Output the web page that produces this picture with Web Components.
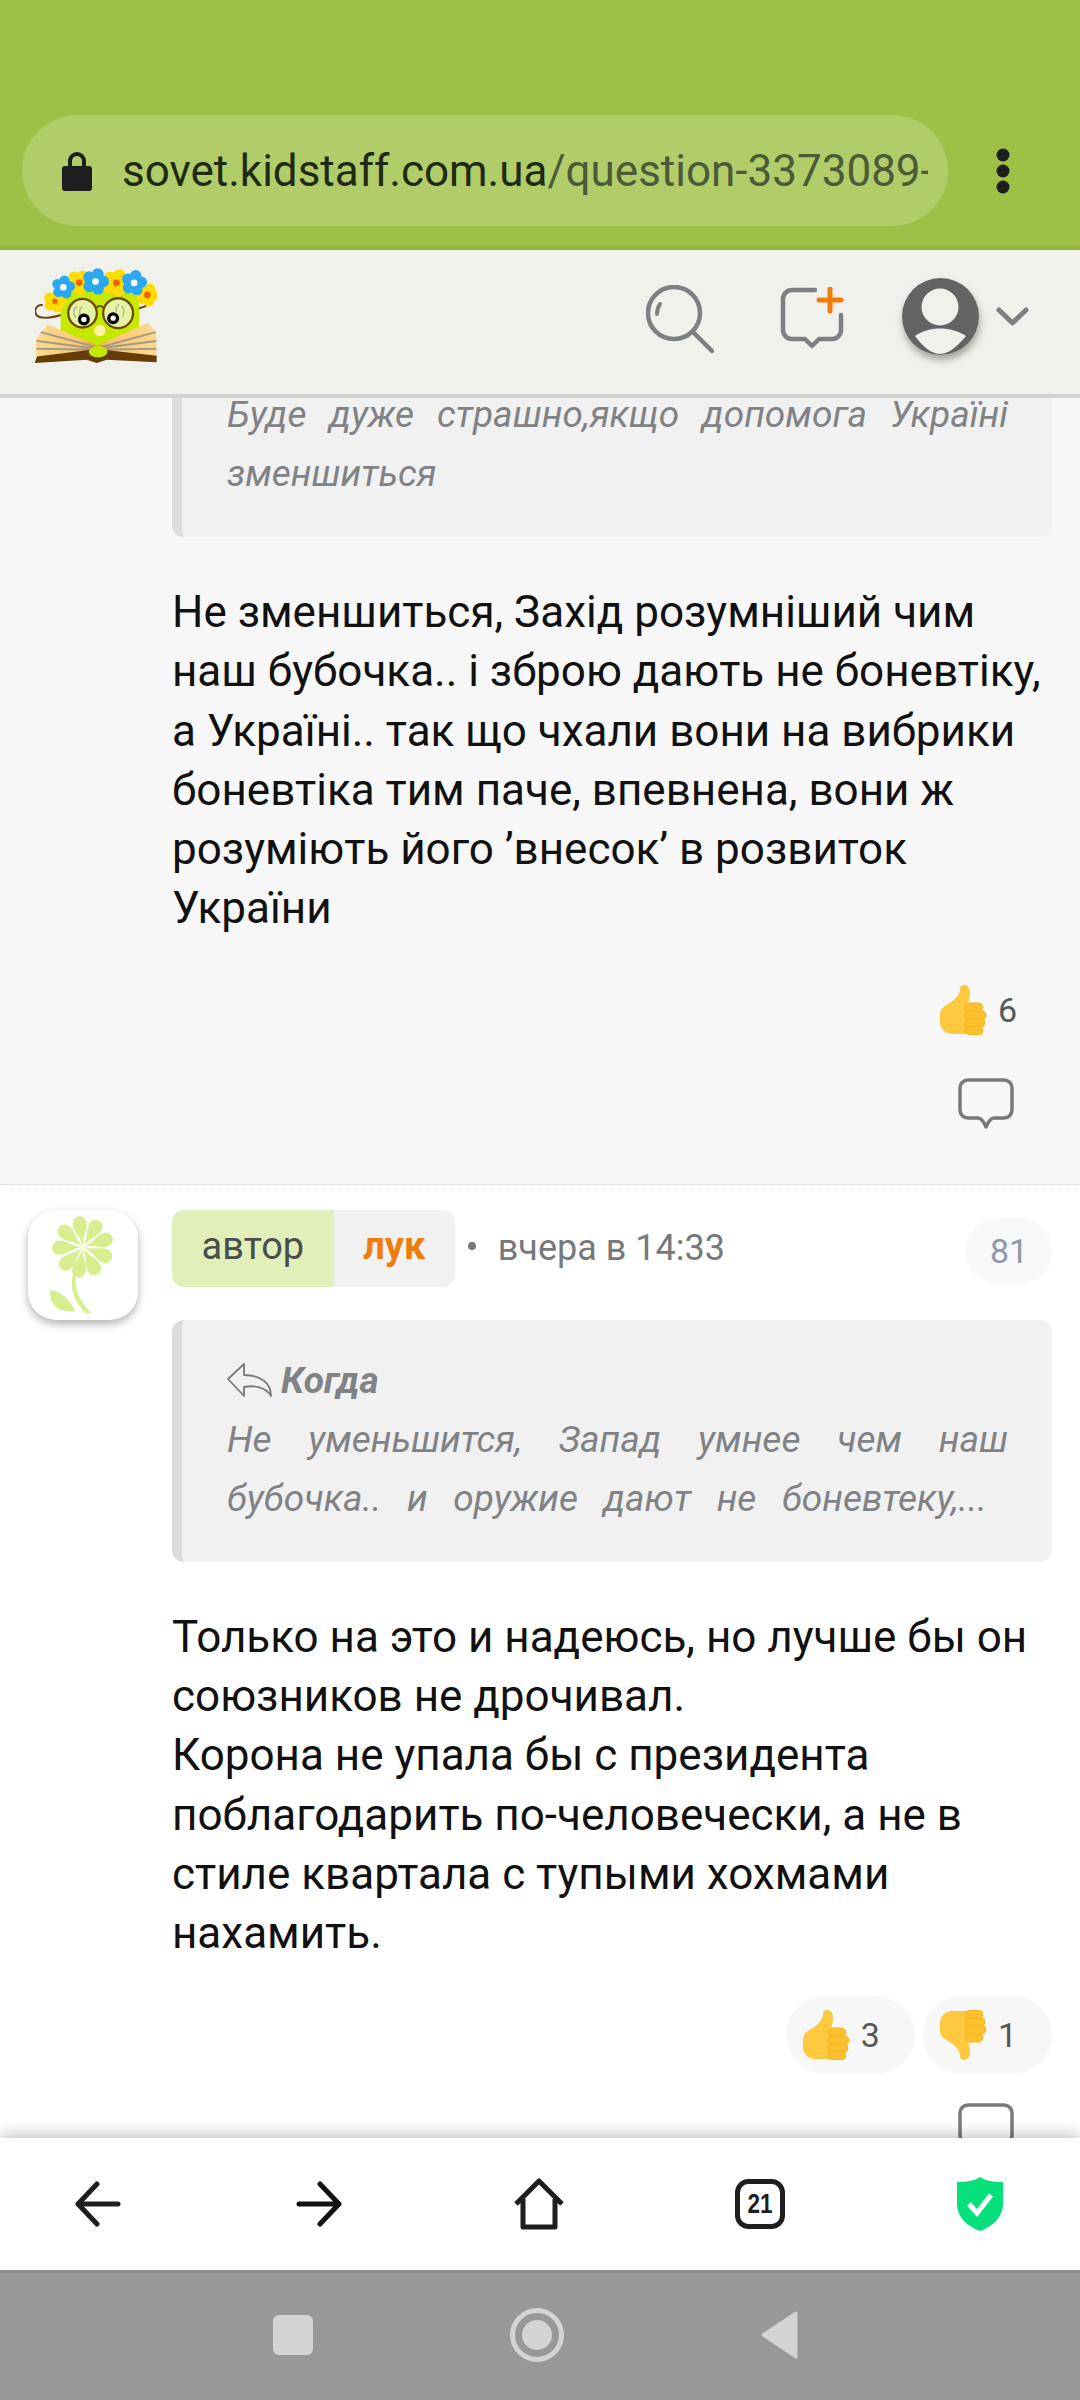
<!DOCTYPE html>
<html lang="uk">
<head>
<meta charset="utf-8">
<title>sovet.kidstaff.com.ua</title>
<style>
  html, body { margin: 0; padding: 0; }
  body {
    width: 1080px;
    height: 2400px;
    overflow: hidden;
    display: flex;
    flex-direction: column;
    background: #fff;
    font-family: Roboto, "Liberation Sans", sans-serif;
  }
</style>
</head>
<body>
<browser-bar url-host="sovet.kidstaff.com.ua" url-path="/question-3373089-"></browser-bar>
<site-header></site-header>
<comment-feed>
  <comment-item shaded>
    <quote-box slot="quote" cut>
      Буде дуже страшно,якщо допомога Україні зменшиться
    </quote-box>
    Не зменшиться, Захід розумніший чим наш бубочка.. і зброю дають не боневтіку, а Україні.. так що чхали вони на вибрики боневтіка тим паче, впевнена, вони ж розуміють його ’внесок’ в розвиток України
    <vote-pill slot="votes" kind="up" count="6"></vote-pill>
  </comment-item>
  <comment-item>
    <flower-avatar slot="avatar"></flower-avatar>
    <comment-meta slot="meta" role-name="автор" nick="лук" time="вчера в 14:33" num="81"></comment-meta>
    <quote-box slot="quote" title="Когда">
      <span class="fit">Не уменьшится, Запад умнее чем наш</span>
      <span class="fit short">бубочка.. и оружие дают не боневтеку,...</span>
    </quote-box>
    Только на это и надеюсь, но лучше бы он союзников не дрочивал.<br>Корона не упала бы с президента поблагодарить по-человечески, а не в стиле квартала с тупыми хохмами нахамить.
    <vote-pill slot="votes" kind="up" count="3"></vote-pill>
    <vote-pill slot="votes" kind="down" count="1"></vote-pill>
  </comment-item>
</comment-feed>
<browser-toolbar></browser-toolbar>
<android-nav></android-nav>

<script>
// address bar of the mobile browser
class BrowserBar extends HTMLElement {
  connectedCallback() {
    this.attachShadow({ mode: 'open' });
    this.shadowRoot.innerHTML = `
      <style>
        :host {
          display: flex;
          flex: none;
          align-items: center;
          box-sizing: border-box;
          height: 250px;
          padding: 115px 0 20px 22px;
          background: #9fc046;
          border-bottom: 4px solid #93b33f;
        }
        .pill {
          width: 926px;
          height: 111px;
          box-sizing: border-box;
          padding: 0 20px 0 40px;
          display: flex;
          align-items: center;
          gap: 30px;
          background: #b0cd6a;
          border-radius: 56px;
        }
        .text {
          flex: 1;
          overflow: hidden;
          white-space: nowrap;
          font-size: 44px;
          color: #4b5a37;
        }
        b { font-weight: 400; color: #1f2a14; }
        .dots { margin-left: 48px; display: block; }
      </style>
      <div class="pill">
        <svg width="30" height="40" viewBox="0 0 30 40"><path d="M8 17V10a7 7 0 0 1 14 0v7" fill="none" stroke="#1e1e1e" stroke-width="4"/><rect x="0" y="15" width="30" height="25" rx="3" fill="#1e1e1e"/></svg>
        <div class="text"><b>${this.getAttribute('url-host')}</b>${this.getAttribute('url-path')}</div>
      </div>
      <svg class="dots" width="14" height="46" viewBox="0 0 14 46" fill="#1e1e1e"><circle cx="7" cy="7" r="6.5"/><circle cx="7" cy="23" r="6.5"/><circle cx="7" cy="39" r="6.5"/></svg>
    `;
  }
}

function flower(cx, cy, r, color, mid, midR) {
  let out = '';
  for (let i = 0; i < 5; i++) {
    const a = (i * 72 - 90 + cx % 30) * Math.PI / 180;
    out += `<circle cx="${cx + Math.cos(a) * r}" cy="${cy + Math.sin(a) * r}" r="${r * 0.78}" fill="${color}"/>`;
  }
  return out + `<circle cx="${cx}" cy="${cy}" r="${r * 0.7}" fill="${color}"/><circle cx="${cx}" cy="${cy}" r="${midR}" fill="${mid}"/>`;
}

class SiteHeader extends HTMLElement {
  connectedCallback() {
    this.attachShadow({ mode: 'open' });
    const crown = [
      flower(165, 212, 20, '#ffdc00', '#f2600c', 8),
      flower(443, 193, 20, '#ffdc00', '#f2600c', 10),
      flower(238, 156, 22, '#ffdc00', '#f2600c', 10),
      flower(350, 157, 24, '#ffdc00', '#f2600c', 10),
      flower(190, 170, 20, '#2aa8f2', '#fff', 10),
      flower(287, 153, 23, '#2aa8f2', '#fff', 10),
      flower(403, 157, 22, '#2aa8f2', '#fff', 10)
    ].join('');
    this.shadowRoot.innerHTML = `
      <style>
        :host {
          display: flex;
          flex: none;
          align-items: flex-start;
          box-sizing: border-box;
          height: 148px;
          padding: 17px 51px 0 35px;
          background: #f0f1ea;
          border-bottom: 4px solid #d2d2d2;
          position: relative;
          z-index: 2;
        }
        .logo { display: block; }
        .tools { margin-left: auto; margin-top: 11px; display: flex; align-items: flex-start; }
        .search { margin: 7px 66px 0 0; }
        .ask { margin: 9px 58.5px 0 0; }
        .user { width: 77px; height: 77px; border-radius: 50%; box-shadow: 1px 5px 7px rgba(70,70,60,.45); }
        .user svg { display: block; }
        .chev { margin: 29px 0 0 17px; }
      </style>
      <svg class="logo" width="122" height="97" viewBox="105 110 367 290">
        <defs><linearGradient id="pg" x1="0" x2="1"><stop offset="0" stop-color="#fcd98f"/><stop offset=".38" stop-color="#fbc872"/><stop offset=".5" stop-color="#f59436"/><stop offset=".62" stop-color="#fbc872"/><stop offset="1" stop-color="#fcd98f"/></linearGradient></defs>
        <path d="M128 224c-12-4-24 8-22 22 4 26 60 16 96 0" fill="none" stroke="#6d4210" stroke-width="6"/>
        <path d="M400 240l40-14" stroke="#6d4210" stroke-width="6"/>
        <rect x="182" y="180" width="236" height="170" fill="#c4e800"/>
        <path d="M108 380V325l35-43 150 63 150-68 27 30v73z" fill="url(#pg)"/>
        <path d="M122 305l165 45M110 332l175 22M110 355l175 3M468 305l-165 45M470 332l-175 22M470 355l-175 3" stroke="#a49a86" stroke-width="6"/>
        <path d="M104 398l7-20 180-22 180 20v20l-150-8-30 10-30-10z" fill="#643c08"/>
        <ellipse cx="295" cy="364" rx="28" ry="17" fill="#c4e800"/>
        <circle cx="300" cy="300" r="17" fill="#fff2a0"/>
        <circle cx="248" cy="248" r="43" fill="#e4f2a6" stroke="#6d4a06" stroke-width="7"/>
        <circle cx="355" cy="248" r="45" fill="#e4f2a6" stroke="#6d4a06" stroke-width="7"/>
        <path d="M290 232c5-8 14-8 20 0" fill="none" stroke="#6d4a06" stroke-width="5"/>
        <path d="M228 262c-10-14-8-28 4-34M244 258c-8-12-6-24 4-30M350 244c-2-10 2-18 8-22M368 258c8-12 6-22-2-32" fill="none" stroke="#a8b48a" stroke-width="4"/>
        <circle cx="252" cy="267" r="18" fill="#000"/><circle cx="252" cy="267" r="8" fill="#fff"/>
        <circle cx="340" cy="263" r="18" fill="#000"/><circle cx="340" cy="263" r="8" fill="#fff"/>
        ${crown}
      </svg>
      <div class="tools">
        <svg class="search" width="68" height="68" viewBox="0 0 68 68" fill="none" stroke="#7c8083" stroke-width="4.5" stroke-linecap="round"><circle cx="28" cy="28" r="26"/><path d="M47 47l19 19"/><path d="M11 29c0-4 1-7 3-10" stroke-width="4"/></svg>
        <svg class="ask" width="64" height="64" viewBox="0 0 64 64" fill="none" stroke-linecap="round"><path d="M35 3H12a9 9 0 0 0-9 9v31a9 9 0 0 0 9 9h13l7 7 7-7h13a9 9 0 0 0 9-9V28" stroke="#7c8083" stroke-width="4.500" stroke-linejoin="round"/><path d="M50 2v22M39 13h22" stroke="#ef7d0c" stroke-width="5"/></svg>
        <div class="user"><svg width="77" height="77" viewBox="0 0 77 77"><circle cx="38.500" cy="38.500" r="38.500" fill="#636363"/><circle cx="38" cy="29" r="18.500" fill="#f0f1ea"/><path d="M13 58c14-10 36-10 51 0-7 8-16 18-26 18S19 66 13 58z" fill="#f0f1ea"/></svg></div>
        <svg class="chev" width="33" height="20" viewBox="0 0 33 20" fill="none" stroke="#7c8083" stroke-width="5" stroke-linecap="round" stroke-linejoin="round"><path d="M3 3l13.500 13L30 3"/></svg>
      </div>
    `;
  }
}

// clips the comments between site header and browser toolbar
class CommentFeed extends HTMLElement {
  connectedCallback() {
    this.attachShadow({ mode: 'open' });
    this.shadowRoot.innerHTML = `
      <style>
        :host { display: block; flex: 1; min-height: 0; overflow: hidden; background: #fff; }
        .inner { margin-top: -44px; }
      </style>
      <div class="inner"><slot></slot></div>
    `;
  }
}

class CommentItem extends HTMLElement {
  connectedCallback() {
    this.attachShadow({ mode: 'open' });
    this.shadowRoot.innerHTML = `
      <style>
        :host {
          display: grid;
          grid-template-columns: 111px 880px;
          column-gap: 33px;
          box-sizing: border-box;
          width: 1080px;
          padding: 25px 28px 54px 28px;
          background: #fff;
          color: #111;
        }
        :host([shaded]) {
          padding-top: 0;
          background: #f7f7f7;
          border-bottom: 1px dotted #cfcfcf;
        }
        .side { grid-column: 1; }
        .main { grid-column: 2; min-width: 0; }
        .body { margin-top: 46px; font-size: 44px; line-height: 59.3px; }
        .votes { display: flex; justify-content: flex-end; gap: 8px; margin-top: 32px; }
        .reply { display: block; margin: 29px 38px 0 auto; }
      </style>
      <div class="side"><slot name="avatar"></slot></div>
      <div class="main">
        <slot name="meta"></slot>
        <slot name="quote"></slot>
        <div class="body"><slot></slot></div>
        <div class="votes"><slot name="votes"></slot></div>
        <svg class="reply" width="56" height="52" viewBox="0 0 56 52" fill="none" stroke="#77797c" stroke-width="3.500" stroke-linejoin="round"><path d="M10 2h36a8 8 0 0 1 8 8v22a8 8 0 0 1-8 8H36c-3 0-5 2-8 9-3-7-5-9-8-9H10a8 8 0 0 1-8-8V10a8 8 0 0 1 8-8z"/></svg>
      </div>
    `;
  }
}

class FlowerAvatar extends HTMLElement {
  connectedCallback() {
    this.attachShadow({ mode: 'open' });
    let petals = '';
    [-8, 32, 72, 112, 152, 190, 226, 268, 310].forEach(a => {
      petals += `<path transform="translate(55 37) rotate(${a})" d="M0-1C-1-11-7-16-7-24a7 7 0 0 1 14 0C7-16 1-11 0-1z"/>`;
    });
    this.shadowRoot.innerHTML = `
      <style>
        :host {
          display: block;
          width: 110px;
          height: 110px;
          background: #fff;
          border-radius: 28px;
          box-shadow: 0 4px 8px rgba(0,0,0,.3);
        }
        svg { display: block; }
      </style>
      <svg width="110" height="110" viewBox="0 0 110 110" fill="#d7ee8f">
        ${petals}
        <path d="M45 64c-4 18 3 28 12 39h6C52 92 46 80 48 64z"/>
        <path d="M22 80c14 2 21 12 25 21-14 2-26-4-25-21z"/>
      </svg>
    `;
  }
}

class CommentMeta extends HTMLElement {
  connectedCallback() {
    this.attachShadow({ mode: 'open' });
    this.shadowRoot.innerHTML = `
      <style>
        :host { display: flex; align-items: center; height: 77px; font-size: 36px; color: #77787b; }
        .chip { display: flex; height: 77px; line-height: 73px; font-size: 38px; border-radius: 12px; overflow: hidden; background: #f1f1f1; }
        .role { padding: 0 29.5px; background: #e1efbb; color: #4b4d4a; }
        .nick { padding: 0 29.5px; color: #ef7d0c; font-weight: 700; }
        .dot { width: 8px; height: 8px; border-radius: 50%; background: #77787b; margin: -4px 22px 0 13px; }
        .time { line-height: 77px; }
        .num {
          margin: 5px 0 0 auto;
          width: 86px;
          height: 66px;
          line-height: 66px;
          text-align: center;
          border-radius: 33px;
          background: #f7f8f9;
          color: #8c99ad;
          font-size: 34px;
        }
      </style>
      <div class="chip"><span class="role">${this.getAttribute('role-name')}</span><span class="nick">${this.getAttribute('nick')}</span></div>
      <span class="dot"></span>
      <span class="time">${this.getAttribute('time')}</span>
      <span class="num">${this.getAttribute('num')}</span>
    `;
  }
}

class QuoteBox extends HTMLElement {
  connectedCallback() {
    this.attachShadow({ mode: 'open' });
    const title = this.getAttribute('title');
    this.removeAttribute('title');
    this.shadowRoot.innerHTML = `
      <style>
        :host {
          display: block;
          box-sizing: border-box;
          margin-top: 33px;
          padding: 31px 44px 34px 45px;
          background: #f1f1f1;
          border-left: 10px solid #dcdcdc;
          border-radius: 12px;
          color: #808285;
          font-size: 37px;
          font-style: italic;
          line-height: 59px;
          text-align: justify;
        }
        :host([cut]) { margin-top: 0; }
        ::slotted(.fit) { display: block; text-align-last: justify; }
        ::slotted(.short) { padding-right: 21px; }
        .head { display: flex; align-items: center; gap: 9px; height: 59px; font-weight: 700; }
        .head svg { display: block; }
      </style>
      ${title ? `<div class="head"><svg width="45" height="34" viewBox="0 0 45 34" fill="none" stroke="#77797c" stroke-width="1.800" stroke-linejoin="round"><path d="M17 1L1 16l16 17v-9c10-2 22 0 27 9 0-12-9-21-27-21z"/></svg>${title}</div>` : ''}
      <slot></slot>
    `;
  }
}

class VotePill extends HTMLElement {
  connectedCallback() {
    this.attachShadow({ mode: 'open' });
    const flip = this.getAttribute('kind') === 'down' ? 'transform="translate(0 50) scale(1 -1)"' : '';
    this.shadowRoot.innerHTML = `
      <style>
        :host {
          display: flex;
          align-items: center;
          gap: 11px;
          height: 78px;
          padding: 0 35px 0 17px;
          border-radius: 39px;
          background: #f7f7f7;
          font-size: 34px;
          color: #555759;
        }
        svg { display: block; }
      </style>
      <svg width="47" height="50" viewBox="0 0 47 50">
        <g ${flip}>
          <path d="M0 30c0-7 5-9 11-13 6-4 9-9 9-13 0-3 2-4 4-4 4 0 6 3 6 8 0 4-1 8-2 10h6v31H12C5 49 0 43 0 37z" fill="#fcc93f"/>
          <g fill="#fbc02d" stroke="#f5b521" stroke-width="1">
            <rect x="25" y="18" width="18" height="9" rx="4.500"/>
            <rect x="25" y="26" width="21" height="8.500" rx="4.200"/>
            <rect x="25" y="34" width="20" height="8" rx="4"/>
            <rect x="25" y="41.500" width="18" height="8" rx="4"/>
          </g>
        </g>
      </svg>
      <span>${this.getAttribute('count')}</span>
    `;
  }
}

class BrowserToolbar extends HTMLElement {
  connectedCallback() {
    this.attachShadow({ mode: 'open' });
    this.shadowRoot.innerHTML = `
      <style>
        :host {
          display: flex;
          flex: none;
          gap: 172.5px;
          height: 132px;
          padding-left: 74px;
          background: #fff;
          box-shadow: 0 -4px 14px rgba(0,0,0,.22);
          position: relative;
          z-index: 2;
        }
        div { width: 48px; display: flex; align-items: center; justify-content: center; }
        svg { display: block; flex: none; }
        text { font-family: "Liberation Sans", sans-serif; font-weight: 700; }
      </style>
      <div><svg width="46" height="46" viewBox="0 0 46 46" fill="none" stroke="#1e1e1e" stroke-width="5" stroke-linecap="round" stroke-linejoin="round"><path d="M22 3L3 23l19 20M3 23h40"/></svg></div>
      <div><svg width="46" height="46" viewBox="0 0 46 46" fill="none" stroke="#111" stroke-width="5" stroke-linecap="round" stroke-linejoin="round"><path d="M24 3l19 20-19 20M43 23H3"/></svg></div>
      <div><svg width="52" height="52" viewBox="0 0 52 52" fill="none" stroke="#1e1e1e" stroke-width="5" stroke-linejoin="round"><path d="M3 26L26 3l23 23M10 21v28h32V21"/></svg></div>
      <div><svg width="50" height="50" viewBox="0 0 50 50"><rect x="2.500" y="2.500" width="45" height="45" rx="11" fill="none" stroke="#1e1e1e" stroke-width="5"/><text x="25" y="34" font-size="28" text-anchor="middle" textLength="25" lengthAdjust="spacingAndGlyphs" fill="#1e1e1e">21</text></svg></div>
      <div><svg width="48" height="56" viewBox="0 0 48 56"><path d="M24 1c5 4 14 5 23 5v22c0 12-9 22-23 27C10 50 1 40 1 28V6c9 0 18-1 23-5z" fill="#08e07c"/><path d="M13 28l8 9 14-18" fill="none" stroke="#fff" stroke-width="5"/></svg></div>
    `;
  }
}

class AndroidNav extends HTMLElement {
  connectedCallback() {
    this.attachShadow({ mode: 'open' });
    this.shadowRoot.innerHTML = `
      <style>
        :host {
          display: flex;
          flex: none;
          align-items: center;
          box-sizing: border-box;
          height: 130px;
          padding: 0 0 4px 273px;
          background: #989898;
          border-top: 3px solid #8c8c8c;
          position: relative;
          z-index: 2;
        }
        .sq { width: 40px; height: 40px; border-radius: 6px; background: #d4d4d4; margin-right: 197px; }
        svg { display: block; }
        .ring { margin-right: 197px; }
      </style>
      <div class="sq"></div>
      <svg class="ring" width="54" height="54" viewBox="0 0 54 54"><circle cx="27" cy="27" r="24.500" fill="none" stroke="#d4d4d4" stroke-width="5"/><circle cx="27" cy="27" r="15" fill="#d4d4d4"/></svg>
      <svg width="37" height="48" viewBox="0 0 37 48"><path d="M35 2v44L2 24z" fill="#d4d4d4" stroke="#d4d4d4" stroke-width="3" stroke-linejoin="round"/></svg>
    `;
  }
}

customElements.define('browser-bar', BrowserBar);
customElements.define('site-header', SiteHeader);
customElements.define('comment-feed', CommentFeed);
customElements.define('comment-item', CommentItem);
customElements.define('flower-avatar', FlowerAvatar);
customElements.define('comment-meta', CommentMeta);
customElements.define('quote-box', QuoteBox);
customElements.define('vote-pill', VotePill);
customElements.define('browser-toolbar', BrowserToolbar);
customElements.define('android-nav', AndroidNav);
</script>
</body>
</html>
